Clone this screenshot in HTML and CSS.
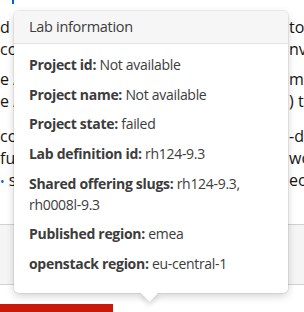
FILE: index.html
```html
<!DOCTYPE html>
<html>
<head>
<meta charset="utf-8">
<link rel="stylesheet" href="styles.css">
</head>
<body>
<div class="page">
  <div class="topline"><span class="link"></span></div>
  <div class="para p1">
    <div class="line"><span class="l">d Hat</span><span class="r">to the</span></div>
    <div class="line"><span class="l">course</span><span class="r">nvironment</span></div>
  </div>
  <div class="para p2">
    <div class="line"><span class="l">e Ansible</span><span class="r">ment</span></div>
    <div class="line"><span class="l">e Ansible</span><span class="r">) to</span></div>
  </div>
  <div class="para p3">
    <div class="line"><span class="l">cope</span><span class="r">-depth</span></div>
    <div class="line"><span class="l">fully</span><span class="r">work</span></div>
    <div class="line"><span class="l"><span class="bullet">•</span> si</span><span class="r">ecure</span></div>
  </div>
  <div class="panel"></div>
  <div class="actions"><div class="redbtn"></div></div>

  <div class="popover">
    <div class="pop-head">Lab information</div>
    <div class="pop-body">
      <div class="item"><b>Project id:</b> Not available</div>
      <div class="item"><b>Project name:</b> Not available</div>
      <div class="item"><b>Project state:</b> failed</div>
      <div class="item"><b>Lab definition id:</b> rh124-9.3</div>
      <div class="item"><b>Shared offering slugs:</b> rh124-9.3, rh0008l-9.3</div>
      <div class="item"><b>Published region:</b> emea</div>
      <div class="item"><b>openstack region:</b> eu-central-1</div>
    </div>
    <div class="arrow"></div>
  </div>
</div>
</body>
</html>
```
FILE: styles.css
```css
html, body {
  margin: 0;
  padding: 0;
  background: #fff;
  overflow: hidden;
}
body {
  width: 304px;
  height: 312px;
  font-family: "Open Sans", "Noto Sans", sans-serif;
  color: #151515;
}
.page {
  position: relative;
  width: 304px;
  height: 312px;
  overflow: hidden;
}
.topline {
  height: 8px;
  padding-left: 12px;
}
.link {
  display: inline-block;
  width: 2px;
  height: 4px;
  background: #0066cc;
  vertical-align: top;
}
.para {
  font-size: 16px;
}
.p1 { margin-top: 8px; }
.p2 { margin-top: 8px; }
.p3 { margin-top: 13px; }
.line {
  display: grid;
  grid-template-columns: 289px 60px;
  line-height: 22px;
  height: 22px;
  white-space: nowrap;
}
.line .l, .line .r {
  overflow: hidden;
}
.bullet {
  color: #0066cc;
  font-size: 12px;
}
.panel {
  margin-top: 33px;
  height: 59px;
  border-top: 1px solid #d2d2d2;
  border-bottom: 1px solid #d2d2d2;
  background: #f5f5f5;
}
.actions {
  padding-top: 19px;
}
.redbtn {
  width: 113px;
  height: 8px;
  background: #c9190b;
}
.popover {
  position: absolute;
  left: 14px;
  top: 11px;
  width: 274px;
  background: #fff;
  border-radius: 5px;
  box-shadow: 0 3px 8px rgba(3, 3, 3, 0.18), 0 0 0 1px rgba(3, 3, 3, 0.06);
  color: #3c3c3c;
}
.pop-head {
  background: #f6f6f6;
  border-bottom: 1px solid #e4e4e4;
  border-radius: 5px 5px 0 0;
  height: 32px;
  line-height: 32px;
  padding-left: 15px;
  font-size: 14.5px;
  letter-spacing: -0.3px;
}
.pop-body {
  padding: 10px 15px 19px;
  display: flex;
  flex-direction: column;
  gap: 8.7px;
  font-size: 14px;
  line-height: 21px;
  letter-spacing: -0.3px;
}
.item b { font-weight: 700; }
.arrow {
  position: absolute;
  left: 129px;
  bottom: -6px;
  width: 13px;
  height: 13px;
  background: #fff;
  transform: rotate(45deg);
  box-shadow: 3px 3px 5px rgba(3, 3, 3, 0.12);
}
```
